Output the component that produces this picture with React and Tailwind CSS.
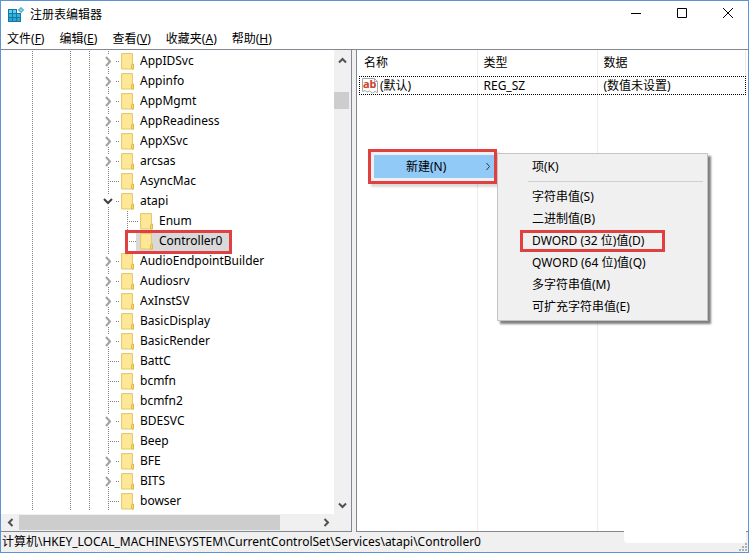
import React from 'react';

const SERVICES = [
  { name: 'AppIDSvc', state: 'closed' },
  { name: 'Appinfo', state: 'closed' },
  { name: 'AppMgmt', state: 'closed' },
  { name: 'AppReadiness', state: 'closed' },
  { name: 'AppXSvc', state: 'closed' },
  { name: 'arcsas', state: 'closed' },
  { name: 'AsyncMac' },
  { name: 'atapi', state: 'open' },
  { name: 'Enum', child: true },
  { name: 'Controller0', child: true, last: true, selected: true },
  { name: 'AudioEndpointBuilder', state: 'closed' },
  { name: 'Audiosrv', state: 'closed' },
  { name: 'AxInstSV', state: 'closed' },
  { name: 'BasicDisplay', state: 'closed' },
  { name: 'BasicRender', state: 'closed' },
  { name: 'BattC' },
  { name: 'bcmfn' },
  { name: 'bcmfn2' },
  { name: 'BDESVC', state: 'closed' },
  { name: 'Beep' },
  { name: 'BFE', state: 'closed' },
  { name: 'BITS', state: 'closed' },
  { name: 'bowser' },
];

const MENUS = [
  ['文件', 'F'],
  ['编辑', 'E'],
  ['查看', 'V'],
  ['收藏夹', 'A'],
  ['帮助', 'H'],
];

const NEW_VALUES = [
  '字符串值(S)',
  '二进制值(B)',
  'DWORD (32 位)值(D)',
  'QWORD (64 位)值(Q)',
  '多字符串值(M)',
  '可扩充字符串值(E)',
];

function AppIcon() {
  return (
    <svg width="16" height="16" viewBox="0 0 16 16" aria-hidden="true">
      <path d="M0 2h9v4h4v9H0z" fill="#1579a3" />
      <path d="M1 3h3v3H1zM5 3h3v3H5z" fill="#5fd0ee" />
      <path d="M1 7h3v3H1zM5 7h3v3H5zM9 7h3v3H9z" fill="#33b4e0" />
      <path d="M1 11h3v3H1zM5 11h3v3H5zM9 11h3v3H9z" fill="#2ba3d4" />
      <path d="M13 0.500l2.500 2.500-2.500 2.500-2.500-2.500z" fill="#7fd4ee" stroke="#2a8fb8" />
    </svg>
  );
}

function FolderIcon() {
  return (
    <svg className="shrink-0" width="14" height="17" viewBox="0 0 14 17" aria-hidden="true">
      <path d="M0.500 0.500h11v10.500l1 1v4H0.500z" fill="#fde38c" stroke="#e2cb74" />
      <path d="M2 2h8v13H2z" fill="#ffe798" />
      <path d="M10.500 16v-4l2-1v5z" fill="#fdd868" stroke="#dfb94c" />
    </svg>
  );
}

function StringIcon() {
  return (
    <svg className="shrink-0" width="16" height="17" viewBox="0 0 16 17" aria-hidden="true">
      <path d="M0.500 1.500h12l3 3v11l-2.500-1-2.500 1.500-3-2-2.500 1-2-1.500-2.500 1z" fill="#fff" stroke="#a8a8a8" />
      <path d="M12.500 1.500v3h3" fill="none" stroke="#a8a8a8" />
      <text x="1" y="11" fontSize="11" fontWeight="700" fill="#c8452c" fontFamily="Noto Sans, sans-serif">ab</text>
    </svg>
  );
}

function Chevron({ d, color = '#505050' }) {
  return (
    <svg width="9" height="9" viewBox="0 0 9 9" fill="none" stroke={color} strokeWidth="2" aria-hidden="true">
      <path d={d} />
    </svg>
  );
}

const UP = 'M1 6.500l3.500-3.500 3.500 3.500';
const DOWN = 'M1 2.500l3.500 3.500 3.500-3.500';
const LEFT = 'M6.500 1l-3.500 3.500 3.500 3.500';
const RIGHT = 'M2.500 1l3.500 3.500-3.500 3.500';

// Dotted connector between a row and its parent, with the expander on top
function Twig({ state, last }) {
  return (
    <svg className="shrink-0" width="19" height="20" viewBox="0 0 19 20" fill="none" aria-hidden="true">
      <g stroke="#808080" strokeDasharray="1 1" shapeRendering="crispEdges">
        {state ? (
          <path d="M6.500 0v4M6.500 16v4M14 10.500h4" />
        ) : (
          <path d={last ? 'M6.500 0v10M8 10.500h10' : 'M6.500 0v20M8 10.500h10'} />
        )}
      </g>
      {state === 'closed' && <path d="M4 6l4 4.500-4 4.500" stroke="#a0a0a0" strokeWidth="2" />}
      {state === 'open' && <path d="M2 8l4 4 4-4" stroke="#404040" strokeWidth="2" />}
    </svg>
  );
}

function Guide() {
  return (
    <svg className="shrink-0" width="19" height="20" viewBox="0 0 19 20" aria-hidden="true">
      <path d="M6.500 0v20" stroke="#808080" strokeDasharray="1 1" shapeRendering="crispEdges" />
    </svg>
  );
}

function TreeRow({ item }) {
  return (
    <li className="flex h-5 items-center">
      <span className="w-[25px] shrink-0" />
      <Guide />
      <span className="w-[19px] shrink-0" />
      <Guide />
      <Guide />
      {item.child && <Guide />}
      <Twig state={item.state} last={item.last} />
      <button
        className={
          item.selected
            ? 'relative -ml-1 flex h-5 items-center gap-1 bg-[#d9d9d9] pl-1 pr-2'
            : 'flex h-5 items-center gap-1 pr-2'
        }
      >
        <FolderIcon />
        <span className="pl-px text-xs leading-5">{item.name}</span>
        {item.selected && (
          <span className="pointer-events-none absolute -bottom-[3px] -left-[11px] -right-0.5 -top-px z-10 border-3 border-[#e04040]" />
        )}
      </button>
    </li>
  );
}

function TreePane() {
  return (
    <section className="flex w-[351px] shrink-0 flex-col border-b border-r border-[#828790] bg-white">
      <div className="flex grow">
        <ul className="grow pt-px">
          {SERVICES.map((item) => (
            <TreeRow key={item.name} item={item} />
          ))}
        </ul>
        <div className="flex w-[17px] flex-col items-center bg-[#f0f0f0]">
          <button aria-label="向上" className="flex h-[17px] w-full items-center justify-center pt-1">
            <Chevron d={UP} />
          </button>
          <div className="w-full grow pr-0.5 pt-[25px]">
            <div className="h-[17px] bg-[#cdcdcd]" />
          </div>
          <button aria-label="向下" className="flex h-[17px] w-full items-center justify-center">
            <Chevron d={DOWN} />
          </button>
        </div>
      </div>
      <div className="flex h-[17px] items-center bg-[#f0f0f0] pr-4">
        <button aria-label="向左" className="flex w-[18px] items-center justify-center">
          <Chevron d={LEFT} />
        </button>
        <div className="grow">
          <div className="h-[15px] w-[261px] bg-[#cdcdcd]" />
        </div>
        <button aria-label="向右" className="flex w-[18px] items-center justify-center">
          <Chevron d={RIGHT} />
        </button>
      </div>
    </section>
  );
}

function ValueList() {
  return (
    <table className="h-full w-full table-fixed border-collapse text-left text-xs">
      <colgroup>
        <col className="w-[118px]" />
        <col className="w-[120px]" />
        <col />
      </colgroup>
      <thead>
        <tr className="h-[26px]">
          <th className="border-r border-[#ececec] p-0 pl-[5px] font-normal">名称</th>
          <th className="border-r border-[#ececec] p-0 pl-1.5 font-normal">类型</th>
          <th className="border-r border-[#ececec] p-0 pl-1.5 font-normal">数据</th>
        </tr>
      </thead>
      <tbody>
        <tr className="h-[19px] outline-1 -outline-offset-1 outline-dotted outline-black">
          <td className="border-r border-[#ececec] p-0 pl-[3px]">
            <div className="flex items-center gap-0.5">
              <StringIcon />
              (默认)
            </div>
          </td>
          <td className="border-r border-[#ececec] p-0 pl-1.5">REG_SZ</td>
          <td className="p-0 pl-1.5">(数值未设置)</td>
        </tr>
        <tr>
          <td className="border-r border-[#ececec]" />
          <td className="border-r border-[#ececec]" />
          <td />
        </tr>
      </tbody>
    </table>
  );
}

function ContextMenu() {
  return (
    <div className="absolute left-[11px] top-[99px] flex items-start text-xs">
      <div className="border-3 border-[#e04040] bg-[#f0f0f0] p-[3px] pr-0 shadow-[3px_3px_2px_rgba(0,0,0,0.15)]">
        <button className="flex h-[23px] w-[120px] items-center justify-between bg-[#91c9f7] pl-8 pr-0.5">
          新建(N)
          <svg width="8" height="9" viewBox="0 0 8 9" fill="none" stroke="#333" aria-hidden="true">
            <path d="M2.500 1l3 3.500-3 3.500" />
          </svg>
        </button>
      </div>
      <div className="mt-1 w-[211px] border border-[#c4c4c4] bg-[#f0f0f0] py-0.5 shadow-[3px_3px_2px_rgba(0,0,0,0.5)]">
        <button className="flex h-[22px] w-full items-center pl-[34px]">项(K)</button>
        <div className="mb-1 ml-[30px] mr-1 mt-[3px] border-t border-[#cfcfcf]" />
        {NEW_VALUES.map((label) => (
          <button key={label} className="relative flex h-[22px] w-full items-center pl-[34px]">
            {label}
            {label.startsWith('DWORD') && (
              <span className="pointer-events-none absolute inset-y-0 left-[22px] right-[42px] border-3 border-[#e04040]" />
            )}
          </button>
        ))}
      </div>
    </div>
  );
}

export default function App() {
  return (
    <div className="flex min-h-screen flex-col overflow-hidden border border-[#5b93d6] bg-white font-['Noto_Sans','Noto_Sans_CJK_SC',sans-serif] text-black">
      {/* 标题栏 */}
      <header className="flex h-[27px] items-center pl-[7px]">
        <AppIcon />
        <h1 className="grow pl-1.5 text-xs">注册表编辑器</h1>
        <div className="flex gap-[34px] pb-1 pr-[14px]">
          <button aria-label="最小化">
            <svg width="12" height="12" viewBox="0 0 12 12" stroke="#000"><path d="M1 6.500h10" /></svg>
          </button>
          <button aria-label="最大化">
            <svg width="12" height="12" viewBox="0 0 12 12" fill="none" stroke="#000"><path d="M1.500 1.500h9v9h-9z" /></svg>
          </button>
          <button aria-label="关闭">
            <svg width="12" height="12" viewBox="0 0 12 12" stroke="#000"><path d="M1 1l10 10M11 1L1 11" /></svg>
          </button>
        </div>
      </header>

      {/* 菜单栏 */}
      <nav className="flex h-[22px] items-center gap-[15px] border-b border-[#828790] pl-1.5 text-xs">
        {MENUS.map(([label, key]) => (
          <button key={key}>
            {label}(<u>{key}</u>)
          </button>
        ))}
      </nav>

      <main className="flex grow bg-[#f0f0f0]">
        <TreePane />
        <section className="relative ml-1 flex grow flex-col border-b border-l border-[#828790] bg-white px-0.5">
          <div className="flex grow">
            <ValueList />
          </div>
          <ContextMenu />
          <div className="absolute -bottom-3 right-0.5 h-4 w-[122px] rounded-sm bg-white" />
        </section>
      </main>

      {/* 状态栏 */}
      <footer className="flex h-5 items-center justify-between bg-[#f0f0f0] pl-px text-xs leading-5">
        <span>计算机\HKEY_LOCAL_MACHINE\SYSTEM\CurrentControlSet\Services\atapi\Controller0</span>
        <svg className="self-end" width="9" height="9" viewBox="0 0 9 9" fill="#b0b0b0" aria-hidden="true">
          <path d="M6 0h2v2H6zM6 3h2v2H6zM3 3h2v2H3zM6 6h2v2H6zM3 6h2v2H3zM0 6h2v2H0z" />
        </svg>
      </footer>
    </div>
  );
}
